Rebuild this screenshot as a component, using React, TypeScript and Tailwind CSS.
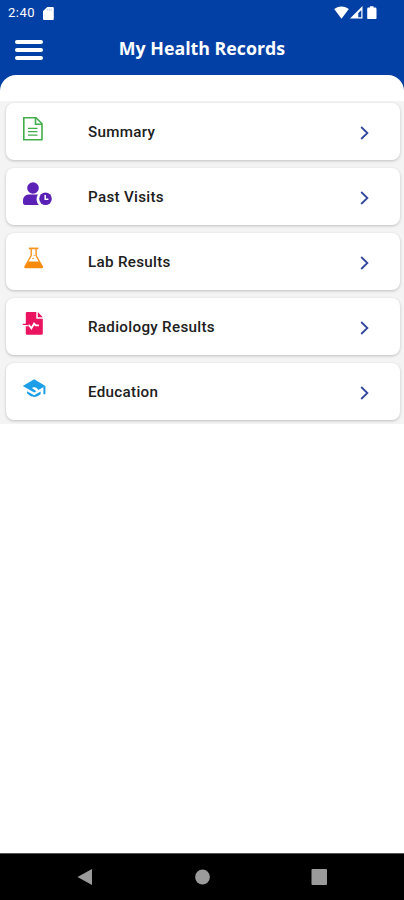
import type { ReactNode } from 'react';

type RecordItem = {
  label: string;
  icon: ReactNode;
};

const records: RecordItem[] = [
  { label: 'Summary', icon: <SummaryIcon /> },
  { label: 'Past Visits', icon: <VisitsIcon /> },
  { label: 'Lab Results', icon: <LabIcon /> },
  { label: 'Radiology Results', icon: <RadiologyIcon /> },
  { label: 'Education', icon: <EducationIcon /> },
];

function SummaryIcon() {
  return (
    <svg width="32" height="26" viewBox="0 0 32 26" fill="none" stroke="#43ad4c">
      <path d="M1.8 1.8h12.2l6 6V23.7H1.8z" strokeWidth="1.6" />
      <path d="M13.5 2v6.2H20" strokeWidth="1.6" />
      <path d="M6 12.3h9.5M6 15.7h9.5M6 19.1h9.5" strokeWidth="1.3" />
    </svg>
  );
}

function VisitsIcon() {
  return (
    <svg width="32" height="26" viewBox="0 0 32 26" fill="#5b21b6">
      <circle cx="11" cy="7" r="5.8" />
      <path d="M6.5 13.6h9.4a8.2 8.2 0 0 0 1 10.3H2.8A1.8 1.8 0 0 1 1 22.1v-2.8a5.7 5.7 0 0 1 5.5-5.7z" />
      <circle cx="23.5" cy="17.8" r="6.3" />
      <path d="M23.2 14v4.2h3.2" fill="none" stroke="white" strokeWidth="1.5" />
    </svg>
  );
}

function LabIcon() {
  return (
    <svg width="32" height="26" viewBox="0 0 32 26" fill="none" stroke="#f7941d">
      <path d="M6.8 2.4h9.6" strokeWidth="1.7" />
      <path d="M9.2 3v6.5L3 20.5q-.3 1 .7 1h16q1 0 .6-1L14.1 9.5V3" strokeWidth="1.4" />
      <path d="M6 15.5h11.2l3.6 6.2H2.6z" fill="#f58a0b" stroke="none" />
      <path d="M10.3 12.5h1.5M11.7 9.5h1" strokeWidth="1" />
    </svg>
  );
}

function RadiologyIcon() {
  return (
    <svg width="32" height="26" viewBox="0 0 32 26">
      <path d="M3.8 2.2Q3.8 1 5 1h9.3v6.8h6.5v14.8q0 1.2-1.2 1.2H5q-1.2 0-1.2-1.2z" fill="#eb1460" />
      <path d="M15.8 1l5 5.3h-5z" fill="#eb1460" />
      <path d="M3.5 14.4h3.7l2.2 3 2.7-4.8 1.6 1.8h3.2" fill="none" stroke="white" strokeWidth="1.8" />
      <path d="M.8 13.3h4.4l1.5 1" fill="none" stroke="#eb1460" strokeWidth="1.3" />
    </svg>
  );
}

function EducationIcon() {
  return (
    <svg width="32" height="26" viewBox="0 0 32 26" fill="#1c9fe8">
      <path d="M.8 9.9L12.2 3.2l11.3 6.7-7.2 4.2q-1-2.7-4.3-3.1l-2.1 1 4.5 3.2-2.2 1.3z" />
      <path d="M21.4 11l2-1.1v8.4h-2z" />
      <path d="M5 15.2l7.2 4 6.4-3.6v2.6q-2.8 2.5-6.4 2.7-4.4-.4-7.2-3.7z" />
    </svg>
  );
}

function StatusBar() {
  return (
    <div className="flex h-[26px] items-center justify-between pr-[25px] pl-2">
      <div className="flex items-center">
        <span className="w-[35px] font-['Roboto',sans-serif] text-[13px] leading-[26px] tracking-[0.5px] text-white">
          2:40
        </span>
        <svg width="12" height="13" viewBox="0 0 12 13" fill="white">
          <path d="M4.3 0h5.5q1 0 1 1v11q0 1-1 1H1q-1 0-1-1V4z" />
          <path d="M4.5 1.7v2M6.3 1.7v2M8.1 1.7v2" stroke="#a7bce4" strokeWidth=".7" />
        </svg>
      </div>
      <svg width="46" height="14" viewBox="0 0 46 14" fill="white">
        <path d="M1.2 2.9Q8.5-2 15.8 2.9L8.5 12.8z" />
        <path d="M29.5 0v12.5H17z" />
        <path d="M28.3 4.2v7h-3V7z" fill="#0340a6" />
        <path d="M37 .3h3.5v1.3h1.7q1.3 0 1.3 1.3v9q0 1.2-1.3 1.2h-6.8q-1.2 0-1.2-1.2v-9q0-1.3 1.2-1.3H37z" />
      </svg>
    </div>
  );
}

function Header() {
  return (
    <header className="grid h-[49px] grid-cols-[60px_1fr_60px]">
      <button className="flex flex-col gap-1 pt-[14px] pl-[15px]" aria-label="Menu">
        <span className="h-[4px] w-[28px] rounded-full bg-white" />
        <span className="h-[4px] w-[28px] rounded-full bg-white" />
        <span className="h-[4px] w-[28px] rounded-full bg-white" />
      </button>
      <h1 className="pt-[10px] text-center font-['Open_Sans',sans-serif] text-[17.8px] leading-6 font-bold whitespace-nowrap text-white">
        My Health Records
      </h1>
    </header>
  );
}

function RecordCard({ label, icon }: RecordItem) {
  return (
    <div className="flex h-[57px] rounded-lg bg-white shadow-[0_1px_3px_rgba(0,0,0,0.22)]">
      <div className="w-[82px] pt-[13px] pl-[16px]">{icon}</div>
      <span className="flex-1 pt-[17px] font-['Roboto',sans-serif] text-[15.2px] leading-6 font-medium tracking-[0.3px] text-[#202020]">
        {label}
      </span>
      <svg className="mt-[22px] mr-[29px]" width="12" height="16" viewBox="0 0 12 16" fill="none" stroke="#34499d" strokeWidth="1.8">
        <path d="M2.2 2l6.2 6-6.2 6" />
      </svg>
    </div>
  );
}

export default function App() {
  return (
    <div className="flex h-[900px] w-[404px] flex-col overflow-hidden bg-white">
      <div className="bg-[#0340a6]">
        <StatusBar />
        <Header />
        <div className="h-[26px] rounded-t-[16px] bg-white" />
      </div>
      <main className="flex-1">
        <div className="flex flex-col gap-2 bg-[#f4f4f4] pt-[2px] pr-[4px] pb-1 pl-[6px]">
          {records.map((item) => (
            <RecordCard key={item.label} label={item.label} icon={item.icon} />
          ))}
        </div>
      </main>
      <nav className="h-[47px] border-t border-[#555] bg-black">
        <svg width="404" height="46" viewBox="0 0 404 46" fill="#9b9b9b">
          <path d="M77.5 23L92 15v16z" />
          <circle cx="202.5" cy="23" r="7.4" />
          <rect x="311.5" y="15" width="15.5" height="16" rx="1" />
        </svg>
      </nav>
    </div>
  );
}
